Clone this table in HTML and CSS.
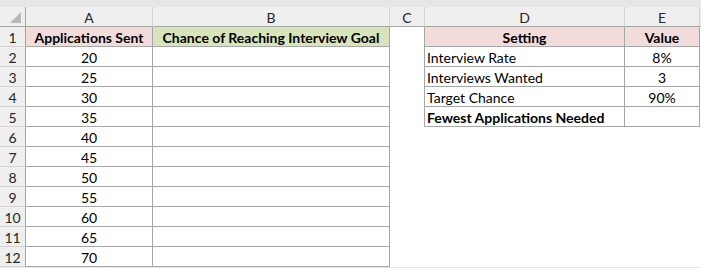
FILE: index.html
```html
<!DOCTYPE html>
<html>
<head>
<meta charset="utf-8">
<link rel="stylesheet" href="styles.css">
</head>
<body>
<div class="sheet">
  <div class="hd corner"><span class="tri"></span></div>
  <div class="hd col">A</div>
  <div class="hd col">B</div>
  <div class="hd col">C</div>
  <div class="hd col">D</div>
  <div class="hd col">E</div>
  <div class="hd col last"></div>

  <div class="hd row">1</div>
  <div class="c b pink ctr bold">Applications Sent</div>
  <div class="c b green ctr bold">Chance of Reaching Interview Goal</div>
  <div class="c cr"></div>
  <div class="c b pink ctr bold">Setting</div>
  <div class="c b pink ctr bold">Value</div>
  <div class="c"></div>

  <div class="hd row">2</div>
  <div class="c b ctr">20</div>
  <div class="c b"></div>
  <div class="c cr"></div>
  <div class="c b left">Interview Rate</div>
  <div class="c b ctr">8%</div>
  <div class="c"></div>

  <div class="hd row">3</div>
  <div class="c b ctr">25</div>
  <div class="c b"></div>
  <div class="c cr"></div>
  <div class="c b left">Interviews Wanted</div>
  <div class="c b ctr">3</div>
  <div class="c"></div>

  <div class="hd row">4</div>
  <div class="c b ctr">30</div>
  <div class="c b"></div>
  <div class="c cr"></div>
  <div class="c b left">Target Chance</div>
  <div class="c b ctr">90%</div>
  <div class="c"></div>

  <div class="hd row">5</div>
  <div class="c b ctr">35</div>
  <div class="c b"></div>
  <div class="c cr"></div>
  <div class="c b left bold">Fewest Applications Needed</div>
  <div class="c b"></div>
  <div class="c"></div>

  <div class="hd row">6</div>
  <div class="c b ctr">40</div>
  <div class="c b"></div>
  <div class="c"></div><div class="c"></div><div class="c"></div><div class="c"></div>

  <div class="hd row">7</div>
  <div class="c b ctr">45</div>
  <div class="c b"></div>
  <div class="c"></div><div class="c"></div><div class="c"></div><div class="c"></div>

  <div class="hd row">8</div>
  <div class="c b ctr">50</div>
  <div class="c b"></div>
  <div class="c"></div><div class="c"></div><div class="c"></div><div class="c"></div>

  <div class="hd row">9</div>
  <div class="c b ctr">55</div>
  <div class="c b"></div>
  <div class="c"></div><div class="c"></div><div class="c"></div><div class="c"></div>

  <div class="hd row">10</div>
  <div class="c b ctr">60</div>
  <div class="c b"></div>
  <div class="c"></div><div class="c"></div><div class="c"></div><div class="c"></div>

  <div class="hd row">11</div>
  <div class="c b ctr">65</div>
  <div class="c b"></div>
  <div class="c"></div><div class="c"></div><div class="c"></div><div class="c"></div>

  <div class="hd row">12</div>
  <div class="c b ctr">70</div>
  <div class="c b"></div>
  <div class="c"></div><div class="c"></div><div class="c"></div><div class="c"></div>
</div>
</body>
</html>
```
FILE: styles.css
```css
html, body {
  margin: 0;
  padding: 0;
  background: #e6e6e6;
}
body {
  padding-top: 7px;
  height: 261px;
  overflow: hidden;
}
.sheet {
  display: grid;
  grid-template-columns: 26px 127px 237px 35px 200px 75px 1fr;
  grid-auto-rows: 20px;
  background: #ffffff;
  font-family: Lato, "Liberation Sans", sans-serif;
  font-size: 14px;
  color: #000;
}
.hd {
  background: #efefef;
  box-sizing: border-box;
  display: flex;
  align-items: center;
  justify-content: center;
  color: #262626;
  line-height: 1;
}
.col {
  border-right: 1px solid #d4d4d4;
  border-bottom: 1px solid #a6a6a6;
  padding-top: 2px;
}
.col.last {
  border-right: none;
}
.row {
  border-right: 1px solid #a6a6a6;
  border-bottom: 1px solid #d4d4d4;
  padding-top: 2px;
}
.corner {
  border-right: 1px solid #a6a6a6;
  border-bottom: 1px solid #a6a6a6;
  position: relative;
}
.tri {
  position: absolute;
  right: 4px;
  bottom: 3px;
  width: 0;
  height: 0;
  border-left: 11px solid transparent;
  border-bottom: 11px solid #b7b7b7;
}
.c {
  box-sizing: border-box;
  display: flex;
  align-items: center;
  white-space: nowrap;
  overflow: hidden;
  line-height: 1;
  padding-top: 2px;
}
.b {
  border-right: 1px solid #a6a6a6;
  border-bottom: 1px solid #a6a6a6;
}
.cr {
  border-right: 1px solid #a6a6a6;
}
.ctr {
  justify-content: center;
}
.left {
  padding-left: 2px;
}
.bold {
  font-weight: 700;
}
.pink {
  background: #f2dcdb;
}
.green {
  background: #d8e4bc;
}
```
